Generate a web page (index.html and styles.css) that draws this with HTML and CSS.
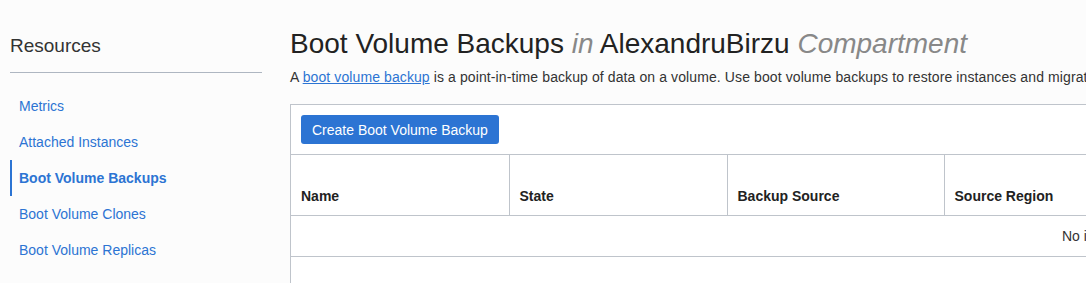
FILE: index.html
```html
<!DOCTYPE html>
<html>
<head>
<meta charset="utf-8">
<link rel="stylesheet" href="styles.css">
</head>
<body>
<div class="page">
  <aside class="sidebar">
    <h2 class="side-title">Resources</h2>
    <ul class="side-nav">
      <li class="side-item"><a class="side-link" href="#">Metrics</a></li>
      <li class="side-item"><a class="side-link" href="#">Attached Instances</a></li>
      <li class="side-item active"><a class="side-link" href="#">Boot Volume Backups</a></li>
      <li class="side-item"><a class="side-link" href="#">Boot Volume Clones</a></li>
      <li class="side-item"><a class="side-link" href="#">Boot Volume Replicas</a></li>
    </ul>
  </aside>
  <main class="content">
    <h1 class="title">Boot Volume Backups <em class="muted">in</em> AlexandruBirzu <em class="muted">Compartment</em></h1>
    <p class="desc">A <a class="desc-link" href="#">boot volume backup</a> is a point-in-time backup of data on a volume. Use boot volume backups to restore instances and migrate boot volumes across regions and compartments.</p>
    <div class="panel">
      <div class="toolbar">
        <button class="btn-primary">Create Boot Volume Backup</button>
      </div>
      <table class="grid">
        <colgroup>
          <col class="c1"><col class="c2"><col class="c3"><col class="c4"><col class="c5"><col class="c6"><col class="c7">
        </colgroup>
        <thead>
          <tr>
            <th>Name</th>
            <th>State</th>
            <th>Backup Source</th>
            <th>Source Region</th>
            <th>Size</th>
            <th>Backup Type</th>
            <th>Created</th>
          </tr>
        </thead>
        <tbody>
          <tr><td class="empty" colspan="7">No items found.</td></tr>
        </tbody>
      </table>
      <div class="footer"></div>
    </div>
  </main>
</div>
</body>
</html>
```

FILE: styles.css
```css
html, body {
  margin: 0;
  padding: 0;
}
body {
  background: #fcfcfc;
  font-family: "Liberation Sans", Arial, Helvetica, sans-serif;
  color: #333;
  overflow: hidden;
  width: 1086px;
  height: 283px;
}
.page {
  display: flex;
  align-items: flex-start;
  gap: 28px;
  padding-left: 10px;
  width: 2200px;
}
.sidebar {
  width: 252px;
  flex: none;
}
.side-title {
  margin: 0;
  padding-top: 34px;
  padding-bottom: 14px;
  font-size: 19px;
  line-height: 24px;
  font-weight: normal;
  color: #333;
  border-bottom: 1px solid #aeb6c1;
}
.side-nav {
  list-style: none;
  margin: 15px 0 0;
  padding: 0;
}
.side-item {
  height: 36px;
  display: flex;
  align-items: center;
  border-left: 2px solid transparent;
  padding-left: 7px;
}
.side-item.active {
  border-left-color: #2c74d3;
}
.side-link {
  font-size: 14px;
  color: #2c74d3;
  text-decoration: none;
}
.side-item.active .side-link {
  font-weight: bold;
}
.content {
  flex: none;
  width: 1700px;
}
.title {
  margin: 0;
  padding-top: 28px;
  font-size: 28px;
  line-height: 32px;
  font-weight: normal;
  color: #222;
}
.muted {
  color: #888;
}
.desc {
  margin: 8px 0 0;
  font-size: 14px;
  line-height: 18px;
  letter-spacing: 0.1px;
  color: #333;
  white-space: nowrap;
}
.desc-link {
  color: #2c74d3;
  text-decoration: underline;
}
.panel {
  margin-top: 18px;
  width: 1640px;
  background: #fff;
  border: 1px solid #bfc4cb;
  border-right: none;
}
.toolbar {
  padding: 10px;
  border-bottom: 1px solid #bfc4cb;
  display: flex;
}
.btn-primary {
  height: 29px;
  padding: 0 11px;
  background: #2c74d3;
  border: none;
  border-radius: 3px;
  color: #fff;
  font-family: inherit;
  font-size: 14px;
}
.grid {
  border-collapse: collapse;
  table-layout: fixed;
  width: 100%;
}
.c1 { width: 218px; }
.c2 { width: 218px; }
.c3 { width: 217px; }
.c4 { width: 217px; }
.c5 { width: 217px; }
.c6 { width: 217px; }
.c7 { width: auto; }
.grid th {
  height: 60px;
  box-sizing: border-box;
  padding: 0 10px 10px;
  vertical-align: bottom;
  text-align: left;
  font-size: 14px;
  line-height: 17px;
  font-weight: bold;
  color: #222;
  border-left: 1px solid #bfc4cb;
  border-bottom: 1px solid #bfc4cb;
}
.grid th:first-child {
  border-left: none;
}
.grid td.empty {
  height: 40px;
  text-align: center;
  font-size: 14px;
  color: #333;
  border-bottom: 1px solid #bfc4cb;
  padding: 0;
}
.footer {
  height: 40px;
}
```
